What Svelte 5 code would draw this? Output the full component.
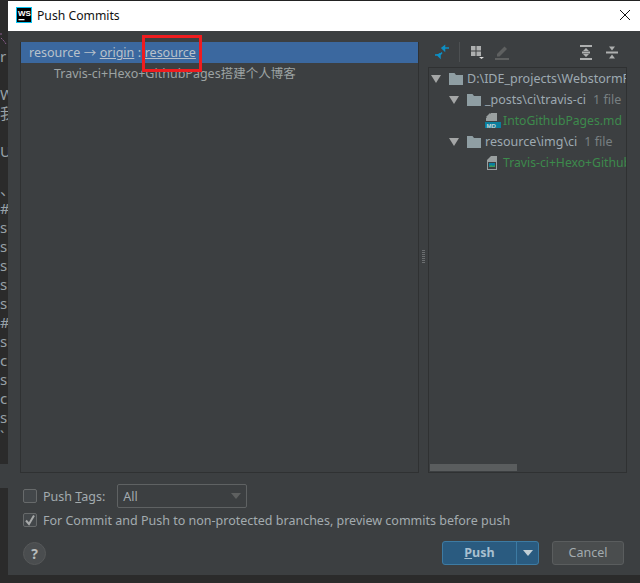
<script>
  const strip = ['', 'r', '', 'W', '我', '', 'U', '', '、', '#', 's', 's', 's', 's', 's', '#', 's', 'c', 's', 'c', 's', '`'];
</script>

<div class="screen">
  <div class="editor" aria-hidden="true">
    <svg class="squiggle" width="8" height="12" viewBox="0 0 8 12">
      <path d="M0 1h3M1 5l3 3 2 3" stroke="#8a5f8f" stroke-width="1" stroke-dasharray="2 1" fill="none" />
    </svg>
    {#each strip as ch}
      <div class="gutter-line">{ch}</div>
    {/each}
    <div class="editor-band"></div>
  </div>

  <div class="dialog">
    <header class="titlebar">
      <svg class="logo" width="16" height="16" viewBox="0 0 16 16">
        <rect x="0" y="0" width="16" height="16" fill="#07c3f2" />
        <rect x="1" y="1" width="14" height="14" fill="#000" />
        <text x="2" y="9" class="logo-text">WS</text>
        <rect x="2.500" y="12" width="6" height="1.300" fill="#fff" />
      </svg>
      <span class="title">Push Commits</span>
      <svg class="close" width="12" height="12" viewBox="0 0 12 12">
        <path d="M1 1 L11 11 M11 1 L1 11" stroke="#111" stroke-width="1" fill="none" />
      </svg>
    </header>

    <div class="body">
      <div class="panes">
        <section class="commits">
          <div class="branch-row">
            <span>resource</span>
            <span class="arrow">→</span>
            <span class="link">origin</span>
            <span>:</span>
            <span class="link">resource</span>
          </div>
          <div class="commit-row">Travis-ci+Hexo+GithubPages搭建个人博客</div>
        </section>

        <div class="splitter"><span class="grip"></span></div>

        <section class="changes">
          <div class="toolbar">
            <svg width="16" height="16" viewBox="0 0 16 16">
              <path d="M15 4H10.500M10.500 2V6.500L8 4Z M8 8.500L6 11H1M6 9V13.500L3.500 11" stroke="#0d8fc4" stroke-width="1.500" fill="#0d8fc4" />
            </svg>
            <span class="tool-sep"></span>
            <svg width="14" height="16" viewBox="0 0 14 16">
              <path d="M0 2h4.500v4.500H0zM5.500 2H10v4.500H5.500zM0 7.500h4.500V12H0zM5.500 7.500H10V12H5.500z" fill="#aeb0b0" />
              <path d="M8 13h5l-2.500 2z" fill="#ddd" />
            </svg>
            <svg class="tool-pen" width="14" height="15" viewBox="0 0 14 15">
              <path d="M0 14h14" stroke="#5e6060" stroke-width="2" />
              <path d="M2 11.500V9L9.500 1.500 12 4 4.500 11.500Z" fill="#5e6060" />
            </svg>
            <span class="tool-gap"></span>
            <svg width="12" height="15" viewBox="0 0 12 15">
              <path d="M0 1h12M0 14h12M2 7.500h8" stroke="#aeb0b0" stroke-width="2" />
              <path d="M6 3l3 3H3zM6 12l3-3H3z" fill="#aeb0b0" />
            </svg>
            <svg class="tool-last" width="12" height="15" viewBox="0 0 12 15">
              <path d="M0 7.500h12" stroke="#aeb0b0" stroke-width="2" />
              <path d="M3 1.500h6L6 5.500zM3 13.500h6L6 9.500z" fill="#aeb0b0" />
            </svg>
          </div>

          <div class="tree">
            <div class="tree-rows">
              <div class="node">
                <span class="twisty"></span>
                <svg class="folder" width="14" height="12" viewBox="0 0 14 12"><path d="M0 0h5.500l1.500 2h7v10H0z" fill="#8f9ea3" /></svg>
                <span class="path">D:\IDE_projects\WebstormProjects</span>
              </div>
              <div class="node depth-1">
                <span class="twisty"></span>
                <svg class="folder" width="14" height="12" viewBox="0 0 14 12"><path d="M0 0h5.500l1.500 2h7v10H0z" fill="#8f9ea3" /></svg>
                <span class="path">_posts\ci\travis-ci</span>
                <span class="count">1 file</span>
              </div>
              <div class="node depth-2">
                <svg class="file" width="16" height="17" viewBox="0 0 16 17">
                  <path d="M6 1h6v8H1V6zM1 5l4-4v4z" fill="#9aa0a0" />
                  <rect x="0" y="10" width="16" height="6" fill="#0a7f9e" />
                  <text x="1.500" y="15.500" class="md-text">MD</text>
                </svg>
                <span class="added">IntoGithubPages.md</span>
              </div>
              <div class="node depth-1">
                <span class="twisty"></span>
                <svg class="folder" width="14" height="12" viewBox="0 0 14 12"><path d="M0 0h5.500l1.500 2h7v10H0z" fill="#8f9ea3" /></svg>
                <span class="path">resource\img\ci</span>
                <span class="count">1 file</span>
              </div>
              <div class="node depth-2 image-node">
                <svg class="file" width="11" height="14" viewBox="0 0 11 14">
                  <path d="M4 0h6v14H0V4z" fill="#9aa0a0" />
                  <rect x="1" y="6" width="8" height="7" fill="#3c3f41" />
                  <rect x="2" y="7" width="6" height="4" fill="#0a7f9e" />
                  <path d="M2 11l2-2 2 1 2-1v2z" fill="#3f9a58" />
                </svg>
                <span class="added">Travis-ci+Hexo+GithubPages.png</span>
              </div>
            </div>
            <div class="scrollbar"><span class="thumb"></span></div>
          </div>
        </section>
      </div>

      <div class="options">
        <div class="option tags">
          <span class="box"></span>
          <span class="label">Push <u>T</u>ags:</span>
          <div class="select">
            <span>All</span>
            <span class="caret"></span>
          </div>
        </div>
        <div class="option">
          <span class="box">
            <svg width="12" height="12" viewBox="0 0 12 12"><path d="M2 6.500L5 10 10 1.500" stroke="#a7a9a9" stroke-width="2" fill="none" /></svg>
          </span>
          <span class="label">For Commit and Push to non-protected branches, preview commits before push</span>
        </div>
      </div>

      <footer class="actions">
        <span class="help">?</span>
        <div class="push">
          <span class="push-main"><u>P</u>ush</span>
          <span class="push-menu"><span class="push-caret"></span></span>
        </div>
        <span class="cancel">Cancel</span>
      </footer>
    </div>
  </div>

  <div class="annotation"></div>
</div>

<style>
  :global(body) { margin: 0; background: #2b2b2b; }
  .screen { position: relative; display: flex; width: 640px; height: 583px; overflow: hidden; font-family: "Noto Sans", "Noto Sans CJK SC", sans-serif; font-size: 12.5px; color: #a9b7c6; background: #2b2b2b; }

  .editor { position: relative; width: 8px; flex: none; padding-top: 28px; overflow: hidden; box-sizing: border-box; }
  .squiggle { position: absolute; left: 0; top: 33px; }
  .gutter-line { height: 19px; line-height: 19px; font-size: 15px; color: #98a1a7; white-space: nowrap; }
  .editor-band { position: absolute; left: 0; top: 464px; width: 8px; height: 24px; background: #3c3f41; }

  .dialog { width: 632px; height: 574px; margin-top: 1px; display: flex; flex-direction: column; background: #3c3f41; box-shadow: 0 -1px 0 #222; }
  .titlebar { height: 30px; flex: none; box-sizing: border-box; display: flex; align-items: center; padding: 0 9px 2px 8px; background: #fff; color: #111; }
  .logo-text { font: bold 8px "Liberation Sans", sans-serif; fill: #fff; }
  .title { margin-left: 5px; font-size: 12.2px; }
  .close { margin-left: auto; }

  .body { flex: 1; display: flex; flex-direction: column; padding: 11px 16px 0 12px; min-height: 0; }
  .panes { height: 431px; flex: none; display: flex; }

  .commits { position: relative; width: 399px; flex: none; box-sizing: border-box; border: 1px solid #2f3132; border-top: none; }
  .branch-row { display: flex; gap: 3.5px; height: 21px; align-items: center; padding-left: 8px; background: #3b689f; color: #b9c2cb; white-space: nowrap; }
  .arrow { font-size: 12.5px; }
  .link { text-decoration: underline; }
  .commit-row { height: 21px; line-height: 21px; padding-left: 33px; color: #9da3a3; white-space: nowrap; }

  .splitter { width: 9px; flex: none; display: flex; align-items: center; justify-content: center; }
  .grip { width: 3px; height: 14px; margin-bottom: 2px; background: repeating-linear-gradient(#6b6e70 0 1px, transparent 1px 2px); }

  .changes { width: 199px; flex: none; display: flex; flex-direction: column; min-width: 0; }
  .toolbar { height: 25px; flex: none; box-sizing: border-box; display: flex; align-items: center; padding: 0 0 5px 6px; }
  .tool-sep { width: 1px; height: 20px; margin: 0 11px 0 9px; background: #4d5052; }
  .tool-pen { margin-left: 10px; }
  .tool-gap { flex: 1; }
  .tool-last { margin: 0 9px 0 14px; }

  .tree { flex: 1; min-height: 0; display: flex; flex-direction: column; border: 1px solid #2f3132; }
  .tree-rows { flex: 1; overflow: hidden; }
  .node { display: flex; align-items: center; height: 21px; white-space: nowrap; color: #a9b7c6; }
  .node.depth-1 { padding-left: 18px; }
  .node.depth-2 { padding-left: 56px; }
  .node.image-node { padding-left: 58px; }
  .twisty { width: 0; height: 0; margin-left: 2px; border-left: 5px solid transparent; border-right: 5px solid transparent; border-top: 8px solid #a4a6a6; }
  .folder { margin: 0 4px 0 8px; flex: none; }
  .path { color: #9eaab2; }
  .count { margin-left: 7px; color: #787f82; }
  .file { margin-right: 2px; flex: none; }
  .image-node .file { margin-right: 5px; }
  .md-text { font: bold 6px "Liberation Sans", sans-serif; fill: #c9d3d6; }
  .added { color: #3d8a4c; font-size: 12.2px; }
  .scrollbar { height: 8px; flex: none; padding: 0 0 1px 1px; box-sizing: border-box; }
  .thumb { display: block; width: 87px; height: 7px; background: #5a5d5e; }

  .options { display: flex; flex-direction: column; padding: 11px 0 0 3px; }
  .option { display: flex; align-items: center; gap: 6px; height: 24px; }
  .box { width: 12px; height: 12px; flex: none; display: flex; align-items: center; justify-content: center; border: 1px solid #676a6b; border-radius: 2px; background: #43474a; }
  .label { color: #a3abaf; white-space: nowrap; }
  .select { width: 130px; height: 24px; margin-left: 6px; box-sizing: border-box; display: flex; align-items: center; justify-content: space-between; padding: 0 5px 0 5px; border: 1px solid #5f6263; border-radius: 2px; color: #a3abaf; }
  .caret { width: 0; height: 0; border-left: 5px solid transparent; border-right: 5px solid transparent; border-top: 6px solid #5e6060; }

  .actions { display: flex; align-items: center; margin-top: 9px; padding-left: 3px; }
  .help { width: 23px; height: 23px; box-sizing: border-box; display: flex; align-items: center; justify-content: center; border: 1px solid #565859; border-radius: 50%; background: #4a4d4f; color: #b8bcbc; font-weight: 700; font-size: 14px; }
  .push { display: flex; height: 24px; box-sizing: border-box; margin-left: auto; border: 1px solid #3d7ba3; border-radius: 3px; background: #2a5b80; }
  .push-main { width: 73px; text-align: center; line-height: 22px; font-weight: 700; color: #a8c0d0; }
  .push-menu { width: 21px; display: flex; align-items: center; justify-content: center; border-left: 1px solid #3d7ba3; }
  .push-caret { width: 0; height: 0; border-left: 5px solid transparent; border-right: 5px solid transparent; border-top: 6px solid #c2cfd6; }
  .cancel { width: 72px; height: 24px; box-sizing: border-box; margin-left: 13px; text-align: center; line-height: 22px; border: 1px solid #5a5d5e; border-radius: 3px; background: #4a4d4e; color: #a3abaf; }

  .annotation { position: absolute; left: 142px; top: 35px; width: 60px; height: 37px; box-sizing: border-box; border: 3px solid #f01c1f; }
</style>
